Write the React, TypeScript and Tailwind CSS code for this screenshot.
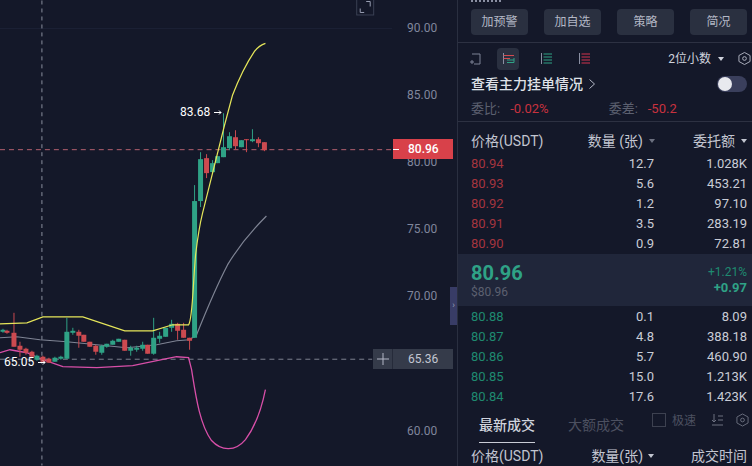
import React from 'react';

const FONT = "font-['Roboto','Noto_Sans_CJK_SC',sans-serif]";

// x, wick top, body top, body bottom, wick bottom, up?
type Candle = [number, number, number, number, number, boolean];

const candles: Candle[] = [
  [3, 329, 330, 332, 333, true],
  [7, 330, 331, 333, 334, false],
  [14, 313, 333, 347, 347, false],
  [20, 342, 346, 350, 357, false],
  [26, 348, 349, 353, 355, false],
  [32, 351, 352, 357, 358, false],
  [37, 355, 356, 360, 361, true],
  [43, 356, 357, 362, 363, false],
  [49, 358, 359, 363, 363, false],
  [55, 357, 358, 362, 362, true],
  [61, 356, 357, 359, 360, true],
  [67, 318, 332, 359, 359, true],
  [73, 328, 331, 333, 335, true],
  [79, 330, 332, 336, 348, false],
  [84, 335, 335, 342, 342, false],
  [90, 342, 342, 347, 347, false],
  [96, 345, 346, 352, 355, false],
  [102, 345, 346, 353, 355, true],
  [107, 344, 344, 347, 348, true],
  [113, 340, 341, 345, 345, true],
  [119, 339, 339, 342, 342, true],
  [125, 340, 340, 351, 351, false],
  [131, 346, 348, 351, 356, true],
  [137, 346, 348, 350, 352, true],
  [143, 342, 345, 349, 351, true],
  [148, 345, 345, 354, 354, false],
  [154, 318, 338, 354, 355, true],
  [160, 332, 336, 339, 343, true],
  [166, 328, 328, 337, 337, true],
  [172, 320, 324, 328, 332, true],
  [178, 323, 324, 331, 340, false],
  [184, 323, 330, 338, 338, false],
  [190, 338, 338, 341, 350, false],
  [195, 185, 201, 338, 338, true],
  [201, 152, 159, 201, 207, true],
  [207, 154, 158, 173, 178, false],
  [213, 160, 163, 172, 173, true],
  [218, 156, 156, 163, 163, true],
  [224, 113, 147, 157, 157, true],
  [230, 132, 136, 148, 150, true],
  [236, 130, 137, 146, 149, false],
  [242, 140, 140, 147, 147, true],
  [247, 139, 139, 140, 152, false],
  [253, 129, 139, 141, 142, true],
  [259, 137, 139, 143, 147, false],
  [265, 142, 142, 150, 151, false],
];

const yellowLine =
  'M0 324 L27 323 L43 317 L60 317 L83 317 L125 331 L153 331 L173 325 L189 325 C193 320 193 290 196 255 C198 238 200 225 203 213 L225 125 L233 95 C238 82 245 66 255 51 C259 46 263 44 266 43';
const grayLine =
  'M0 338 L17 337 L40 340 L67 342 L97 345 L127 348 L157 345 L177 341 L190 340 L197 335 C203 320 215 290 228 265 C240 245 255 228 267 216';
const pinkLine =
  'M0 353 L10 350 L27 353 L43 360 L63 367 L97 368 L133 366 L167 359 L177 357 L189 358 L192 370 C196 395 200 425 212 441 C222 452 236 452 246 440 C255 428 262 410 266 390';

const axisLabels = [
  { y: 32, text: '90.00' },
  { y: 99, text: '85.00' },
  { y: 166, text: '80.00' },
  { y: 233, text: '75.00' },
  { y: 300, text: '70.00' },
  { y: 435, text: '60.00' },
];

const asks = [
  ['80.94', '12.7', '1.028K'],
  ['80.93', '5.6', '453.21'],
  ['80.92', '1.2', '97.10'],
  ['80.91', '3.5', '283.19'],
  ['80.90', '0.9', '72.81'],
];

const bids = [
  ['80.88', '0.1', '8.09'],
  ['80.87', '4.8', '388.18'],
  ['80.86', '5.7', '460.90'],
  ['80.85', '15.0', '1.213K'],
  ['80.84', '17.6', '1.423K'],
];

const Caret = ({ className }: { className: string }) => (
  <span className={`inline-block w-0 h-0 border-x-[3px] border-x-transparent border-t-[4px] ${className}`} />
);

const Arrow = () => (
  <svg width="8" height="7" viewBox="0 0 8 7" fill="none" stroke="#ffffff" className="ml-[4px]">
    <path d="M0 3.5 H7 M5 1.5 L7 3.5 L5 5.5" />
  </svg>
);

const Chart = () => (
  <div className="relative w-[458px] h-full shrink-0 border-r border-[#2a2f40]">
    <svg className="block w-full h-full" viewBox="0 0 458 466">
      <line x1="0" y1="28" x2="393" y2="28" stroke="#1c2136" />
      <line x1="42" y1="0" x2="42" y2="466" stroke="#8a8f9e" strokeDasharray="4 4" />
      <line x1="0" y1="149.5" x2="393" y2="149.5" stroke="#b4606e" strokeDasharray="5 4" />
      <line x1="0" y1="359.5" x2="373" y2="359.5" stroke="#7d8290" strokeDasharray="5 4" />
      <path d={grayLine} fill="none" stroke="#7f8494" strokeWidth="1.2" />
      <path d={pinkLine} fill="none" stroke="#d84fa8" strokeWidth="1.3" />
      {candles.map(([x, wt, bt, bb, wb, up]) => {
        const color = up ? '#2fa286' : '#cc4a50';
        return (
          <g key={x}>
            <line x1={x} y1={wt} x2={x} y2={wb} stroke={color} />
            <rect x={x - 2.5} y={bt} width="5" height={Math.max(bb - bt, 1)} fill={color} />
          </g>
        );
      })}
      <path d={yellowLine} fill="none" stroke="#e6e65a" strokeWidth="1.2" />
      {/* expand icon */}
      <g fill="none" stroke="#9aa0b4" strokeWidth="1">
        <rect x="357.5" y="-3.5" width="17" height="18" stroke="#3a4054" />
        <path d="M361 8 V12 H365 M371 6 V1 H367" />
      </g>
      {axisLabels.map((l) => (
        <text key={l.y} x="408" y={l.y} fontSize="12" fill="#80869c" fontFamily="Roboto, sans-serif">
          {l.text}
        </text>
      ))}
    </svg>

    <div className="absolute left-[180px] top-[105px] flex items-center text-xs leading-[14px] text-white">
      83.68
      <Arrow />
    </div>
    <div className="absolute left-[4px] top-[355px] flex items-center text-xs leading-[14px] text-white">
      65.05
      <Arrow />
    </div>

    <div className="absolute left-[393px] top-[139px] w-[60px] h-[20px] flex items-center gap-[9px] bg-[#d8414a] text-white text-xs font-medium">
      <span className="w-[6px] h-px bg-white" />
      80.96
    </div>

    <div className="absolute left-[373px] top-[349px] w-[80px] h-[20px] flex items-center bg-[#353b4a] text-[#c3c7d2] text-xs">
      <span className="w-[20px] h-full flex items-center justify-center border-r border-[#262b3a]">
        <svg width="12" height="12" viewBox="0 0 12 12" stroke="#b4b8c6">
          <path d="M0 6 H12 M6 0 V12" />
        </svg>
      </span>
      <span className="pl-[15px]">65.36</span>
    </div>

    <div className="absolute right-0 top-[287px] w-[7px] h-[38px] flex items-center justify-center bg-[#383c66] text-[9px] text-[#9aa0b8]">›</div>
  </div>
);

const BookRow = ({ row, color }: { row: string[]; color: string }) => (
  <div className="flex h-[20px] items-center text-[13px] text-[#c9ccd6]">
    <span className={`w-[60px] ${color}`}>{row[0]}</span>
    <span className="w-[123px] text-right">{row[1]}</span>
    <span className="flex-1 text-right">{row[2]}</span>
  </div>
);

export default function App() {
  return (
    <div className={`flex w-[752px] h-[466px] overflow-hidden bg-[#141829] ${FONT}`}>
      <Chart />

      <div className="flex-1 min-w-0 flex flex-col overflow-hidden">
        <div className="h-[43px] px-[13px] pr-[5px] flex flex-col border-b border-[#2d3142] shrink-0">
          <div className="w-[30px] h-[2px] border-t-2 border-dotted border-[#8a8fa2]" />
          <div className="mt-[7px] flex gap-[16px]">
            {['加预警', '加自选', '策略', '简况'].map((b) => (
              <div key={b} className="w-[57px] h-[26px] flex items-center justify-center rounded bg-[#2a3040] text-xs text-[#b4b8c6]">
                {b}
              </div>
            ))}
          </div>
        </div>

        <div className="h-[79px] px-[13px] pr-[1px] flex flex-col border-b border-[#2d3142] shrink-0">
          <div className="h-[28px] mt-[2px] flex items-center">
            <svg width="14" height="14" viewBox="0 0 14 14" fill="none" stroke="#7d8296" className="ml-[-3px]">
              <path d="M4 2 H12 V12 H6 M2 10 H6 M4 8 V12" />
            </svg>
            <div className="w-[22px] h-[22px] ml-[15px] rounded bg-[#2a3040] flex items-center justify-center">
              <svg width="13" height="13" viewBox="0 0 13 13" fill="none">
                <path d="M1.5 1 V12" stroke="#8a8fa2" />
                <path d="M1.5 3.5 H12 M1.5 6.5 H8" stroke="#d24b50" />
                <path d="M5 8 H12 M5 10.5 H12 V6" stroke="#2fa286" />
              </svg>
            </div>
            <svg width="13" height="13" viewBox="0 0 13 13" fill="none" className="ml-[21px]">
              <path d="M1.5 1 V12" stroke="#8a8fa2" />
              <path d="M3.5 2 H12 M3.5 5 H12 M3.5 8 H12 M3.5 11 H12" stroke="#2fa286" />
            </svg>
            <svg width="13" height="13" viewBox="0 0 13 13" fill="none" className="ml-[25px]">
              <path d="M1.5 1 V12" stroke="#8a8fa2" />
              <path d="M3.5 2 H12 M3.5 5 H12 M3.5 8 H12 M3.5 11 H12" stroke="#d2334f" />
            </svg>
            <span className="ml-auto text-xs text-[#d0d3dd]">2位小数</span>
            <Caret className="ml-[7px] border-t-[#d0d3dd]" />
            <svg width="13" height="15" viewBox="0 0 14 15" fill="none" stroke="#b4b8c6" className="ml-[14px]">
              <path d="M7 1 L13 4.3 V10.7 L7 14 L1 10.7 V4.3 Z" />
              <circle cx="7" cy="7.5" r="2" />
            </svg>
          </div>

          <div className="h-[24px] flex items-center">
            <span className="text-sm font-medium text-[#dfe1e8]">查看主力挂单情况</span>
            <svg width="8" height="12" viewBox="0 0 8 12" fill="none" stroke="#b4b8c6" className="ml-[5px]">
              <path d="M1.5 1.5 L6.5 6 L1.5 10.5" />
            </svg>
            <div className="ml-auto mr-[4px] w-[30px] h-[16px] rounded-full bg-[#3a3f5c] flex items-center">
              <span className="ml-px w-[14px] h-[14px] rounded-full bg-[#e8e9ee]" />
            </div>
          </div>

          <div className="h-[24px] mt-px flex items-center text-[13px]">
            <span className="text-[#5c6070]">委比:</span>
            <span className="ml-[10px] text-[#c8323f]">-0.02%</span>
            <span className="ml-[60px] text-[#5c6070]">委差:</span>
            <span className="ml-[10px] text-[#c8323f]">-50.2</span>
          </div>
        </div>

        <div className="px-[13px] pr-[5px] shrink-0">
          <div className="flex h-[32px] pt-[5px] items-center text-sm text-[#c2c5d0]">
            <span className="w-[73px] whitespace-nowrap">价格(USDT)</span>
            <span className="w-[111px] flex items-center justify-end gap-[6px] whitespace-nowrap">
              数量 (张)
              <Caret className="border-t-[#6c7080]" />
            </span>
            <span className="flex-1 flex items-center justify-end gap-[6px]">
              委托额
              <Caret className="border-t-[#c2c5d0]" />
            </span>
          </div>
          {asks.map((r) => (
            <BookRow key={r[0]} row={r} color="text-[#a5353f]" />
          ))}
        </div>

        <div className="h-[52px] px-[13px] pr-[5px] bg-[#20263a] flex items-center justify-between shrink-0">
          <div className="flex flex-col">
            <span className="text-[20px] leading-[24px] font-bold text-[#2fa286]">80.96</span>
            <span className="text-xs leading-[14px] text-[#5c6070]">$80.96</span>
          </div>
          <div className="flex flex-col items-end">
            <span className="text-xs leading-[16px] text-[#1f8a70]">+1.21%</span>
            <span className="text-[13px] leading-[16px] font-bold text-[#2fa286]">+0.97</span>
          </div>
        </div>

        <div className="px-[13px] pr-[5px] pt-px shrink-0">
          {bids.map((r) => (
            <BookRow key={r[0]} row={r} color="text-[#1f8a70]" />
          ))}
        </div>

        <div className="h-[36px] px-[13px] pr-[3px] flex shrink-0">
          <div className="ml-[8px] w-[56px] h-[36px] pt-[8px] border-b border-[#c9ccd6] text-sm font-medium text-[#d0d3dd] text-center whitespace-nowrap">最新成交</div>
          <div className="ml-[33px] pt-[8px] text-sm text-[#4c5060] whitespace-nowrap">大额成交</div>
          <div className="ml-auto flex items-start pt-[6px] text-xs text-[#4c5060]">
            <span className="w-[14px] h-[14px] border border-[#3d4150]" />
            <span className="ml-[6px]">极速</span>
            <svg width="13" height="13" viewBox="0 0 13 13" fill="none" stroke="#6c7080" className="ml-[15px]">
              <path d="M3 1 V9 M1 7 L3 9 L5 7 M7 3 H12 M7 7 H12 M1 12 H12" />
            </svg>
            <svg width="13" height="14" viewBox="0 0 14 15" fill="none" stroke="#6c7080" className="ml-[12px]">
              <path d="M7 1 L13 4.3 V10.7 L7 14 L1 10.7 V4.3 Z" />
              <circle cx="7" cy="7.5" r="2" />
            </svg>
          </div>
        </div>

        <div className="px-[13px] pr-[5px] flex h-[26px] items-center justify-between text-sm text-[#c2c5d0] shrink-0">
          <span className="whitespace-nowrap">价格(USDT)</span>
          <span className="ml-[11px] flex items-center gap-[5px] whitespace-nowrap">
            数量(张)
            <Caret className="border-t-[#c2c5d0]" />
          </span>
          <span className="whitespace-nowrap">成交时间</span>
        </div>
      </div>
    </div>
  );
}
